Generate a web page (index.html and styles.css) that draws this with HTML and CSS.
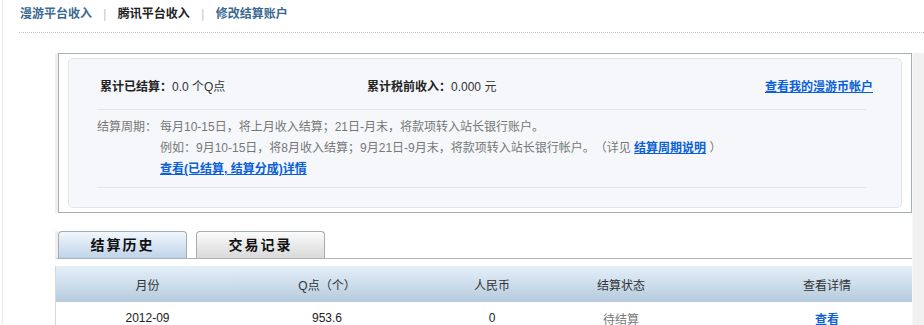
FILE: index.html
```html
<!DOCTYPE html>
<html lang="zh-CN">
<head>
  <meta charset="UTF-8" />
  <title>腾讯平台收入</title>
  <link rel="stylesheet" href="styles.css">
</head>
<body>
  <div class="page">
    <!-- Top Nav -->
    <div class="nav">
      <a href="#">漫游平台收入</a>
      <span class="sep">|</span>
      <span class="current">腾讯平台收入</span>
      <span class="sep">|</span>
      <a href="#">修改结算账户</a>
    </div>

    <div class="content">
      <div class="main">
        <!-- Summary -->
        <div class="summary">
          <div class="summary-inner">
            <div class="totals">
              <div class="total-settled"><b>累计已结算：</b>0.0 个Q点</div>
              <div class="total-income"><b>累计税前收入：</b>0.000 元</div>
              <a href="#" class="link">查看我的漫游币帐户</a>
            </div>
            <div class="cycle">
              <div class="cycle-label">结算周期：</div>
              <div class="cycle-text">
                <p>每月10-15日，将上月收入结算；21日-月末，将款项转入站长银行账户。</p>
                <p>例如：9月10-15日，将8月收入结算；9月21日-9月末，将款项转入站长银行帐户。（详见 <a href="#" class="link">结算周期说明</a> ）</p>
                <p><a href="#" class="link">查看(已结算, 结算分成)详情</a></p>
              </div>
            </div>
          </div>
        </div>

        <!-- Tabs -->
        <div class="tabs">
          <a href="#" class="tab active">结算历史</a>
          <a href="#" class="tab">交易记录</a>
        </div>

        <!-- Table -->
        <table class="history">
          <thead>
            <tr>
              <th class="c-month">月份</th>
              <th class="c-q">Q点（个）</th>
              <th class="c-rmb">人民币</th>
              <th class="c-status">结算状态</th>
              <th class="c-view">查看详情</th>
            </tr>
          </thead>
          <tbody>
            <tr>
              <td>2012-09</td>
              <td>953.6</td>
              <td>0</td>
              <td class="pending">待结算</td>
              <td class="c-view"><a href="#" class="link">查看</a></td>
            </tr>
          </tbody>
        </table>
      </div>
      <div class="side-strip"></div>
    </div>
  </div>
</body>
</html>
```

FILE: styles.css
```css
html, body {
  margin: 0;
  padding: 0;
  background: #ffffff;
  font-family: "Liberation Sans", "Noto Sans CJK SC", sans-serif;
  font-size: 12px;
  color: #333;
  text-spacing-trim: space-all;
}

.page {
  margin-left: 2px;
  border-left: 1px solid #e4ebf2;
  min-height: 325px;
}

/* Top Nav */
.nav {
  margin-left: 16px;
  height: 32px;
  line-height: 29px;
  border-bottom: 1px dotted #c4c4c4;
  padding-left: 1px;
  font-weight: bold;
}
.nav a {
  color: #3a6891;
  text-decoration: none;
}
.nav .current {
  color: #222;
}
.nav .sep {
  color: #c4c4c4;
  font-weight: normal;
  margin: 0 8px;
}

/* Content */
.content {
  display: flex;
  margin-top: 20px;
  margin-left: 52px;
}
.main {
  flex: 1;
}
.side-strip {
  width: 11px;
  background: #f1f1f1;
  border-left: 1px solid #f8f8f8;
}

.link {
  color: #0a5fd8;
  font-weight: bold;
  text-decoration: underline;
}

/* Summary Box */
.summary {
  border-left: 3px solid #efefef;
}
.summary-inner {
  background: #fff;
  border: 1px solid #a4aeb6;
  padding: 4px 9px;
}
.totals {
  display: flex;
  align-items: center;
  background: #f5f7fb;
  border: 1px solid #e0e5eb;
  border-bottom: none;
  border-radius: 5px 5px 0 0;
  padding: 20px 28px 0 31px;
}
.totals > div,
.totals > a {
  padding-bottom: 14px;
  line-height: 16px;
}
.totals .total-settled {
  width: 267px;
}
.totals .total-income {
  flex: 1;
}
.totals b {
  color: #222;
}

.cycle {
  position: relative;
  display: flex;
  background: #f5f7fb;
  border: 1px solid #e0e5eb;
  border-top: none;
  border-radius: 0 0 5px 5px;
  padding: 0 35px 20px 28px;
  color: #777;
}
/* separator lines above and below the cycle notes */
.cycle::before,
.cycle::after {
  content: "";
  position: absolute;
  left: 28px;
  right: 35px;
  border-top: 1px solid #e2e5ea;
}
.cycle::before {
  top: 0;
}
.cycle::after {
  bottom: 19px;
}
.cycle-label {
  width: 63px;
  flex-shrink: 0;
}
.cycle-label,
.cycle-text {
  padding-top: 8px;
  padding-bottom: 7px;
  line-height: 21px;
}
.cycle-text {
  flex: 1;
}
.cycle-text p {
  margin: 0;
}

/* Tabs */
.tabs {
  display: flex;
  gap: 9px;
  margin-top: 18px;
  border-left: 3px solid #efefef;
  border-bottom: 1px solid #a9b1b9;
  height: 27px;
}
.tab {
  width: 127px;
  height: 26px;
  line-height: 26px;
  text-align: center;
  border: 1px solid #a4acb4;
  border-bottom: none;
  border-radius: 4px 4px 0 0;
  font-size: 14px;
  font-weight: bold;
  letter-spacing: 2px;
  color: #111;
  text-decoration: none;
  background: linear-gradient(#fbfbfb, #d9d9d9);
}
.tab.active {
  background: linear-gradient(#f1f7fd, #bfd3e8);
}

/* Table */
table.history {
  width: 100%;
  margin-top: 5px;
  border-collapse: collapse;
  border-left: 1px solid #d6d6d6;
  border-top: 1px solid #ececec;
  text-align: center;
}
.history th {
  height: 34px;
  font-weight: normal;
  color: #333;
  background: linear-gradient(#e4f0f9, #b6cadd);
  border-top: 2px solid #fff;
}
.history td {
  height: 30px;
  color: #222;
}
.history .c-month { width: 181px; }
.history .c-q { width: 174px; }
.history .c-rmb { width: 152px; }
.history .c-status { width: 102px; }
.history .c-view { padding-left: 70px; }
.history .pending {
  color: #777;
}
```
